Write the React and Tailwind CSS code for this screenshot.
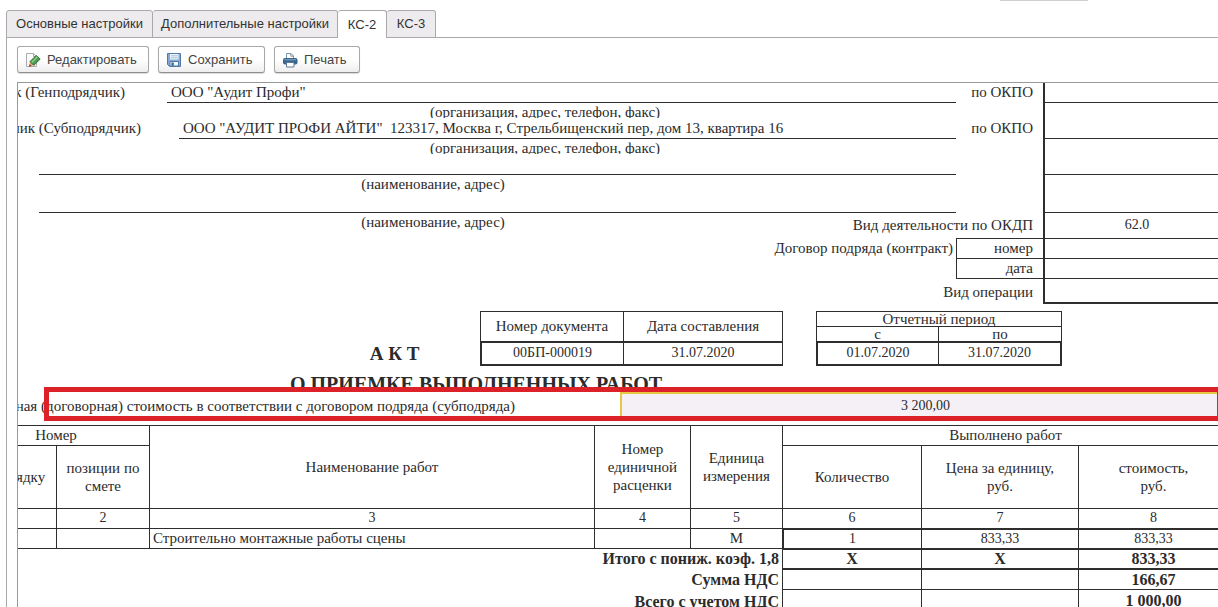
import React from "react";

const tabs = [
  { label: "Основные настройки", width: "w-[147px]" },
  { label: "Дополнительные настройки", width: "w-[185px]" },
  { label: "КС-2", width: "w-[49px]" },
  { label: "КС-3", width: "w-[49px]" },
];

function EditIcon() {
  return (
    <svg width="16" height="16" viewBox="0 0 16 16" aria-hidden="true">
      <path d="M1.5 1.5h7l3 3v10h-10z" fill="#fbfbfb" stroke="#a9adb0" />
      <path d="M8.5 1.5v3h3" fill="none" stroke="#a9adb0" />
      <path d="M4 14.6l1-5 4 3.6z" fill="#e9a06a" />
      <path d="M4 14.8l.6-2.6 1.9 1.7z" fill="#8c2f22" />
      <path d="M5 9.6l6.2-6.2 4 3.7-6.4 6.3z" fill="#4a9a4c" stroke="#2d6b35" strokeWidth=".9" />
      <path d="M6.8 10.4l5.6-5.6" stroke="#8fd088" strokeWidth="1.4" />
    </svg>
  );
}

function SaveIcon() {
  return (
    <svg width="16" height="16" viewBox="0 0 16 16" aria-hidden="true">
      <path d="M1.5 1.5h13v13h-11l-2-2z" fill="#85a9d2" stroke="#5079a8" />
      <path d="M4 2h8.5v5.5H4z" fill="#f1f5fa" />
      <path d="M4.8 3.8h7M4.8 5.8h7" stroke="#a9bfd8" />
      <path d="M4 9.5h8.5V14H4z" fill="#f4f7fa" stroke="#5079a8" />
      <path d="M5.4 10.5h2.4v3.2H5.4z" fill="#41698f" />
    </svg>
  );
}

function PrintIcon() {
  return (
    <svg width="16" height="16" viewBox="0 0 16 16" aria-hidden="true">
      <path d="M4.5 6.5V1.5h4.5l2.5 2.5v2.5" fill="#fff" stroke="#7f93a8" />
      <path d="M8.8 1.5v2.7h2.7" fill="none" stroke="#7f93a8" />
      <rect x="1" y="6" width="14.5" height="6.5" rx="2" fill="#34648f" />
      <path d="M2.5 7.8h11.5" stroke="#86abc9" />
      <path d="M4.5 10.5h7.5v4.5H4.5z" fill="#fff" stroke="#5c7896" />
    </svg>
  );
}

function ToolButton({ icon, width, children }) {
  return (
    <button
      type="button"
      className={
        "flex h-[27px] items-center gap-[6px] rounded-[3px] border border-[#a8a8a8] border-b-[#8e8e8e] bg-linear-to-b from-white from-50% to-[#eeeeee] pl-[7px] text-[13px] text-[#444] shadow-[0_1px_1px_rgba(0,0,0,0.15)] " +
        width
      }
    >
      {icon}
      {children}
    </button>
  );
}

function CodeCell({ className = "", children }) {
  return (
    <div
      className={
        "flex w-[186px] shrink-0 items-center justify-center border-b border-l-2 border-[#2e2e2e] text-[14px] " +
        className
      }
    >
      {children}
    </div>
  );
}

function Caption({ children }) {
  return (
    <div className="h-[15px] overflow-hidden pl-[171px] text-center leading-[18px]">{children}</div>
  );
}

function Requisites() {
  return (
    <section>
      <div className="flex h-5">
        <div className="flex flex-1">
          <div className="w-[204px] pr-[42px] text-right">Заказчик (Генподрядчик)</div>
          <div className="flex-1 border-b border-[#2e2e2e] pl-1">ООО "Аудит Профи"</div>
        </div>
        <div className="w-[87px] pr-[10px] text-right">по ОКПО</div>
        <CodeCell />
      </div>
      <div className="flex h-9">
        <div className="flex-1">
          <Caption>(организация, адрес, телефон, факс)</Caption>
          <div className="flex h-[21px] leading-5">
            <div className="w-[216px] pr-[38px] text-right">Подрядчик (Субподрядчик)</div>
            <div className="flex-1 border-b border-[#2e2e2e] pl-1">
              ООО "АУДИТ ПРОФИ АЙТИ"&nbsp; 123317, Москва г, Стрельбищенский пер, дом 13, квартира 16
            </div>
          </div>
        </div>
        <div className="w-[87px] pt-4 pr-[10px] text-right">по ОКПО</div>
        <CodeCell />
      </div>
      <div className="flex h-9">
        <div className="flex-1">
          <Caption>(организация, адрес, телефон, факс)</Caption>
          <div className="ml-[76px] h-[21px] border-b border-[#2e2e2e]" />
        </div>
        <div className="w-[87px]" />
        <CodeCell />
      </div>
      <div className="flex h-[38px]">
        <div className="flex-1">
          <div className="h-[18px] pr-[53px] text-center">(наименование, адрес)</div>
          <div className="ml-[76px] h-5 border-b border-[#2e2e2e]" />
        </div>
        <div className="w-[87px]" />
        <CodeCell />
      </div>
      <div className="flex h-[26px]">
        <div className="flex-1 pr-[53px] text-center">(наименование, адрес)</div>
        <div className="flex w-[87px] items-center justify-end border-b border-[#2e2e2e] pr-[10px] pb-px whitespace-nowrap">
          Вид деятельности по ОКДП
        </div>
        <CodeCell className="pb-px">62.0</CodeCell>
      </div>
      <div className="flex h-5">
        <div className="flex-1 pr-[3px] text-right">Договор подряда (контракт)</div>
        <div className="w-[87px] border-b border-l border-[#2e2e2e] pr-[10px] text-right">номер</div>
        <CodeCell />
      </div>
      <div className="flex h-5">
        <div className="flex-1" />
        <div className="w-[87px] border-b border-l border-[#2e2e2e] pr-[10px] text-right">дата</div>
        <CodeCell />
      </div>
      <div className="flex h-[25px]">
        <div className="flex-1 pt-1 pr-[10px] text-right">Вид операции</div>
        <CodeCell className="border-b-2" />
      </div>
    </section>
  );
}

function Title() {
  return (
    <section>
      <div className="flex pt-[7px]">
        <div className="flex-1 pt-8 pl-[346px] text-center text-[19px] leading-[22px] font-bold">
          А К Т
        </div>
        <table className="w-[303px] table-fixed border-separate border-spacing-0 text-center">
          <thead>
            <tr className="h-[31px]">
              <th className="w-[144px] border border-[#2e2e2e] pb-px font-normal">Номер документа</th>
              <th className="border-y border-r border-[#2e2e2e] pb-px font-normal">Дата составления</th>
            </tr>
          </thead>
          <tbody className="text-[14px]">
            <tr className="h-6">
              <td className="border-t border-r border-b-2 border-l-2 border-[#2e2e2e] pb-[2px]">00БП-000019</td>
              <td className="border-t border-r border-b-2 border-[#2e2e2e] pb-[2px]">31.07.2020</td>
            </tr>
          </tbody>
        </table>
        <table className="mr-[167px] ml-[33px] w-[246px] table-fixed border-separate border-spacing-0 text-center leading-[14px]">
          <thead>
            <tr>
              <th colSpan={2} className="h-4 border border-[#2e2e2e] font-normal">Отчетный период</th>
            </tr>
            <tr>
              <th className="h-[15px] w-[124px] border-x border-b border-[#2e2e2e] font-normal">с</th>
              <th className="h-[15px] border-r border-b border-[#2e2e2e] font-normal">по</th>
            </tr>
          </thead>
          <tbody className="text-[14px]">
            <tr className="h-6">
              <td className="border-t border-r border-b-2 border-l-2 border-[#2e2e2e] pb-[2px]">01.07.2020</td>
              <td className="border-t border-r-2 border-b-2 border-[#2e2e2e] pb-[2px]">31.07.2020</td>
            </tr>
          </tbody>
        </table>
      </div>
      <h1 className="h-[22px] overflow-hidden pt-[6px] pl-[327px] text-[20px] leading-[24px] font-bold">
        О ПРИЕМКЕ ВЫПОЛНЕННЫХ РАБОТ
      </h1>
    </section>
  );
}

function ContractCost() {
  return (
    <section className="relative flex h-[37px] pt-1 pb-2">
      <div className="flex flex-1 items-end justify-end pr-[105px] pb-[2px] whitespace-nowrap">
        Сметная (договорная) стоимость в соответствии с договором подряда (субподряда)
      </div>
      <div className="flex w-[609px] items-center justify-center border-t-2 border-l-2 border-[#e8c840] bg-[#f5f0f5] text-[14px]">
        3 200,00
      </div>
      <div className="pointer-events-none absolute -top-px right-[7px] bottom-1 left-[81px] border-[5px] border-[#dc2228]" />
    </section>
  );
}

const th = "border-r border-b border-[#2e2e2e] pb-px font-normal";
const td = "border-r border-b border-[#2e2e2e]";

function Works() {
  return (
    <table className="w-full table-fixed border-separate border-spacing-0 border-t border-[#2e2e2e] text-center">
      <colgroup>
        <col className="w-[94px]" />
        <col className="w-[93px]" />
        <col />
        <col className="w-[96px]" />
        <col className="w-[92px]" />
        <col className="w-[139px]" />
        <col className="w-[157px]" />
        <col className="w-[150px]" />
      </colgroup>
      <thead>
        <tr className="h-5">
          <th colSpan={2} className={th}>Номер</th>
          <th rowSpan={2} className={th}>Наименование работ</th>
          <th rowSpan={2} className={th}>Номер единичной расценки</th>
          <th rowSpan={2} className={th}>Единица измерения</th>
          <th colSpan={3} className={th}>Выполнено работ</th>
        </tr>
        <tr className="h-[63px]">
          <th className={th}>по порядку</th>
          <th className={th}>позиции по смете</th>
          <th className={th}>Количество</th>
          <th className={th}>Цена за единицу,<br />руб.</th>
          <th className={th}>стоимость,<br />руб.</th>
        </tr>
        <tr className="h-5 text-[14px]">
          {[1, 2, 3, 4, 5, 6, 7, 8].map((n) => (
            <th key={n} className={th}>{n}</th>
          ))}
        </tr>
      </thead>
      <tbody>
        <tr className="h-5">
          <td className={td} />
          <td className={td} />
          <td className={td + " pb-px pl-[3px] text-left"}>Строительно монтажные работы сцены</td>
          <td className={td} />
          <td className={td + " pb-px"}>М</td>
          <td className={td + " border-t border-l text-[14px]"}>1</td>
          <td className={td + " border-t text-[14px]"}>833,33</td>
          <td className={td + " border-t text-[14px]"}>833,33</td>
        </tr>
        <tr className="h-5 text-[16px] font-bold">
          <td colSpan={5} className="border-r border-[#2e2e2e] pr-[3px] text-right">Итого с пониж. коэф. 1,8</td>
          <td className={td + " border-t"}>Х</td>
          <td className={td + " border-t"}>Х</td>
          <td className={td + " border-t"}>833,33</td>
        </tr>
        <tr className="h-[21px] text-[16px] font-bold">
          <td colSpan={5} className="border-r border-[#2e2e2e] pr-[3px] text-right">Сумма НДС</td>
          <td className={td + " border-t"} />
          <td className={td + " border-t"} />
          <td className={td + " border-t"}>166,67</td>
        </tr>
        <tr className="h-[21px] text-[16px] font-bold">
          <td colSpan={5} className="border-r border-[#2e2e2e] pt-[2px] pr-[3px] text-right">Всего с учетом НДС</td>
          <td className={td} />
          <td className={td} />
          <td className={td + " pt-[2px]"}>1 000,00</td>
        </tr>
      </tbody>
    </table>
  );
}

export default function App() {
  return (
    <div className="flex h-screen flex-col overflow-hidden bg-white pl-[6px] font-['Liberation_Sans',Arial,sans-serif]">
      <div className="flex h-[10px] shrink-0 justify-end pr-[130px]">
        <div className="h-px w-[88px] bg-[#d0d0d0]" />
      </div>
      <nav className="flex h-7 shrink-0 border-b border-[#a9a9a9]">
        {tabs.map(({ label, width }, i) => (
          <button
            key={label}
            type="button"
            aria-current={label === "КС-2" ? "page" : undefined}
            className={
              "h-7 rounded-t-[3px] border-t border-r border-[#a9a9a9] text-center text-[13px] whitespace-nowrap text-[#333] " +
              width +
              (i === 0 ? " border-l" : "") +
              (label === "КС-2" ? " bg-white" : " border-b bg-[#edebed]")
            }
          >
            {label}
          </button>
        ))}
      </nav>
      <main className="flex min-h-0 flex-1 flex-col border-l border-[#a9a9a9] pt-2 pl-[10px]">
        <div className="flex shrink-0 gap-[9px] pb-[9px]">
          <ToolButton width="w-[132px]" icon={<EditIcon />}>Редактировать</ToolButton>
          <ToolButton width="w-[107px]" icon={<SaveIcon />}>Сохранить</ToolButton>
          <ToolButton width="w-[86px]" icon={<PrintIcon />}>Печать</ToolButton>
        </div>
        <div className="min-h-0 flex-1 overflow-hidden border-t border-l border-[#999]">
          <div className="-mr-[11px] -ml-[55px] font-['Liberation_Serif','Times_New_Roman',serif] text-[15px] leading-[18px] text-[#2b2b2b]">
            <Requisites />
            <Title />
            <ContractCost />
            <Works />
          </div>
        </div>
      </main>
    </div>
  );
}
